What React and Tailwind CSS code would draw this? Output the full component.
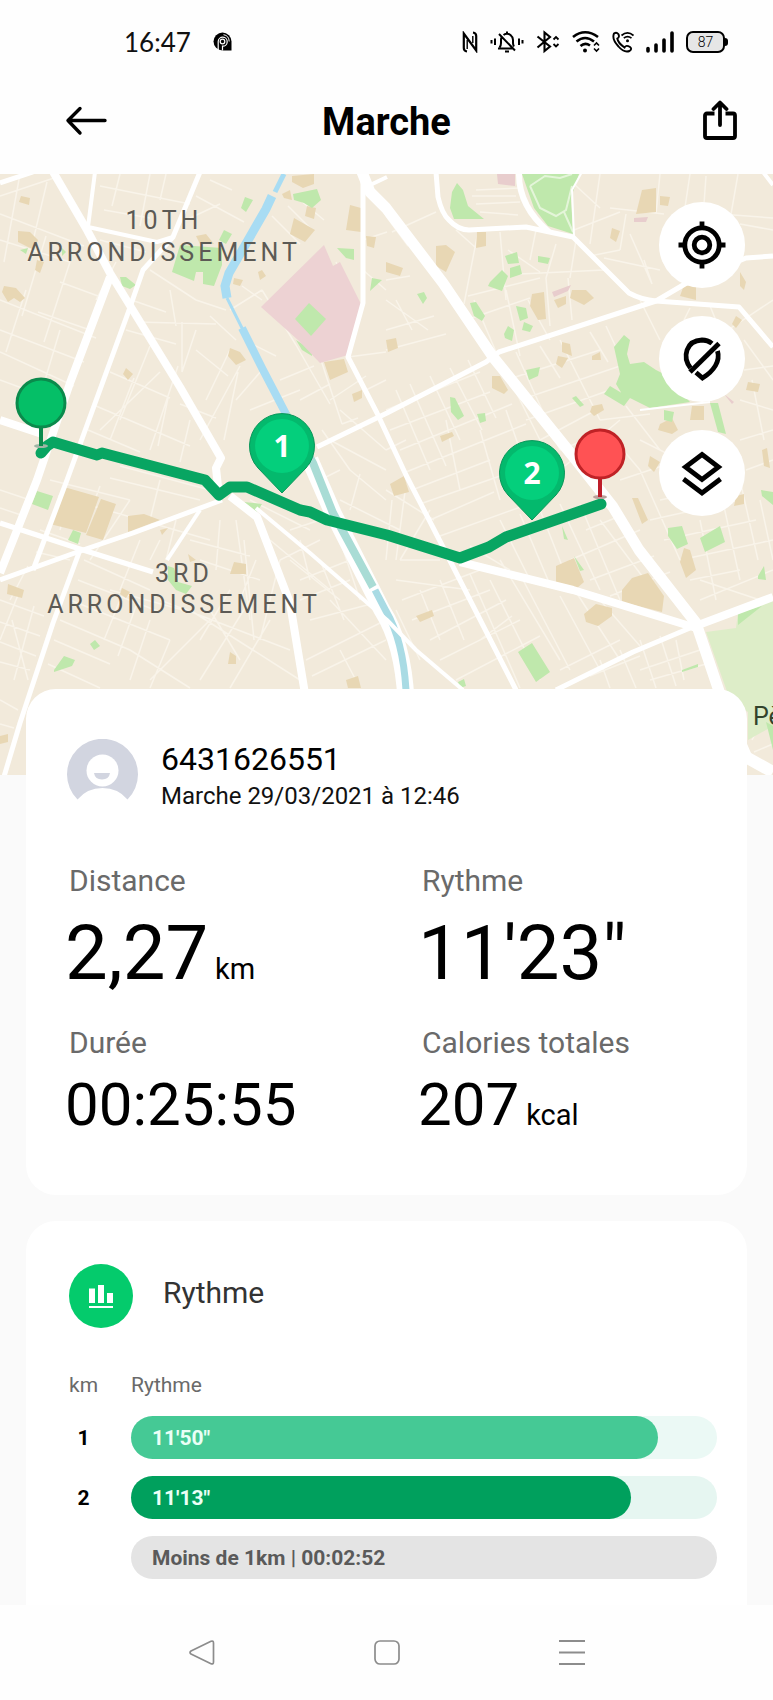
const SPLITS = [
  { km: "1", pace: "11'50\"", share: 90, fill: "bg-[#45c995]", track: "bg-[#ebf9f5]" },
  { km: "2", pace: "11'13\"", share: 85.3, fill: "bg-[#00a05d]", track: "bg-[#e6f6f1]" },
];

const MINOR_ROADS = [
  "M0 214L84 246M0 240L70 262M0 196L60 176M0 300L96 338M0 330L84 362M0 352L74 386M0 380L60 402M20 174L4 262M47 182L28 262M46 236L22 316M70 262L44 342M26 290L6 352M60 330L36 410M22 388L14 404",
  "M100 186L190 204M104 210L150 218M120 174L112 206M150 174L140 226M196 196L244 222M186 220L220 204M166 174L160 200M210 180L232 190M100 240L146 252M116 262L96 300M60 282L98 296M38 312L90 330M120 296L166 312",
  "M126 330L176 344M136 322L216 324M170 290L176 326M150 270L196 300M196 300L226 310M182 322L182 372M150 346L120 420M178 366L150 450M196 330L182 372M160 372L100 430M196 350L228 376M230 350L206 400M240 366L200 440M110 372L170 398M96 406L190 446M88 430L140 452M168 398L158 446M180 404L216 418M190 420L180 462M134 378L110 440M236 340L210 316M238 372L224 440",
  "M244 340L276 356M230 310L262 290M262 290L296 345M262 370L236 400M280 380L314 366M296 345L330 404M250 410L300 390M262 300L242 286M300 400L330 384M288 206L312 230M272 216L300 244M300 200L324 220M336 262L352 300M320 357L342 424M330 400L366 376M342 424L358 418M366 390L386 380M363 240L387 232M363 270L386 290M348 357L386 352",
  "M386 216L408 246M392 232L436 212M386 280L410 276M386 300L428 330M386 330L434 316M386 350L446 334M396 300L412 330M456 230L476 248M478 232L464 304M500 232L506 300M468 296L540 278M466 320L530 298M520 274L604 270M536 230L530 260M556 244L546 278M506 290L520 356M474 300L496 352M546 278L550 326M528 300L550 340M568 278L572 320M576 240L570 278M540 272L508 250",
  "M476 190L520 188M472 196L516 196M476 204L520 202M480 212L518 215M574 184L600 208M600 174L590 244M610 208L664 214M626 214L620 250M620 250L590 256M630 234L652 284M660 174L656 214M690 174L684 214M706 176L704 204M738 174L730 220M720 214L773 218M740 224L773 230M574 230L620 212M604 258L660 270M644 260L652 284",
  "M500 360L540 440M516 352L560 450M540 346L560 378M560 340L600 420M590 332L608 362M606 326L620 356M506 380L600 350M520 400L620 366M526 420L610 390M540 440L600 408M600 420L650 414M626 406L660 450M560 450L610 430M640 440L700 470M560 470L620 420M606 430L640 470M640 300L660 340M690 308L684 320M710 306L724 340",
  "M396 390L430 470M410 384L446 466M430 376L460 440M450 368L482 430M468 360L496 418M386 410L480 372M390 430L490 392M400 450L512 404M406 472L526 424M412 490L490 460M420 504L500 476M430 520L494 492M440 536L540 500M446 420L460 490M480 430L500 500M506 410L520 450M386 450L406 440",
  "M386 490L434 520M392 500L386 560M406 484L396 560M430 510L400 560M350 470L386 500M330 440L386 470M322 430L350 470M340 410L386 450M320 480L340 470M340 500L400 530M360 474L350 510",
  "M400 560L440 560M396 580L470 590M402 600L480 570M412 620L490 590M430 640L506 600M440 660L520 620M456 680L540 636M470 574L520 688M490 580L540 680M500 560L560 660M520 574L570 670M560 596L600 670M576 592L620 660M600 600L640 646M480 640L512 616M420 590L440 640M396 610L420 660M440 580L464 640M500 520L530 580M520 514L548 580M540 510L570 586M560 504L600 590M580 504L620 600M470 546L510 570",
  "M600 520L660 600M586 530L620 516M570 560L640 530M590 580L654 556M610 596L670 572M640 470L680 560M660 500L720 488M650 520L740 500M664 540L756 520M680 560L773 540M690 580L740 570M700 600L773 570M720 488L740 580M740 480L758 560M760 500L773 560M700 520L716 600M620 480L680 460M740 440L773 430M746 470L773 460M740 400L773 410M752 380L764 440M744 370L773 366M744 340L773 380M728 330L773 300M700 580L760 600",
  "M560 670L620 640M600 660L610 688M620 650L636 688M640 640L656 688M660 636L676 686M640 670L700 650M650 680L706 664M676 640L684 680M590 676L640 656",
  "M50 480L130 500M58 496L210 540M110 478L200 500M120 466L210 490M130 500L90 560M160 480L150 520M100 486L84 530M0 490L30 500M0 508L24 516M40 530L80 544M36 552L70 560M70 490L60 530M140 540L120 590M160 540L150 560M176 520L166 560M84 560L150 590M78 580L160 612M70 600L170 640M60 620L130 650M54 640L110 664M48 664L100 688M0 600L44 616M0 622L40 636M0 642L36 656M0 662L30 670M20 590L0 640M34 606L14 680M28 566L10 600M12 620L28 680",
  "M190 540L250 556M200 560L260 580M220 520L216 570M236 520L250 620M244 540L254 640M256 560L240 600M230 590L200 640M210 620L150 680M250 600L200 680M270 620L230 688M120 600L104 640M136 606L118 656M150 620L130 680M170 640L150 688M190 610L300 680M160 600L290 650M130 650L190 688M110 590L190 612M210 610L240 660M280 560L260 640",
  "M270 540L330 590M290 560L340 600M280 560L320 540M300 580L350 560M300 600L350 580M310 620L386 600M306 660L386 620M312 676L386 640M320 560L344 620M340 540L360 600M330 600L386 660M340 650L360 688M300 540L310 580M290 530L320 520M250 500L310 530",
  "M752 740L773 700M754 752L773 744M766 700L773 730M0 700L18 710M0 724L14 728",
].join("");

const GREEN_AREAS = [
  "M180 245L222 248L222 265L214 286L203 284L203 272L196 272L194 281L172 272Z",
  "M245 197L253 200L246 212L241 208Z",
  "M224 230L232 234L226 244L219 240Z",
  "M293 194L317 189L321 200L312 208L304 203L294 200Z",
  "M120 277L126 277L136 285L130 289L122 286Z",
  "M20 250L28 248L26 254ZM62 248L66 252L62 256Z",
  "M337 248L354 249L354 260L346 258Z",
  "M372 278L382 280L370 291Z",
  "M296 340L312 350L312 356L302 350Z",
  "M452 192L457 183L463 190L468 206L484 219L454 219L450 208Z",
  "M505 256L517 252L519 263L508 264ZM510 268L520 265L522 274L510 278ZM490 282L502 270L508 276L502 291L488 286Z",
  "M538 256L550 258L548 264L538 262Z",
  "M417 294L424 292L427 298L423 304Z",
  "M470 303L476 302L485 316L482 321L474 316Z",
  "M516 306L526 308L528 318L520 321ZM524 322L533 326L530 332L522 330ZM504 334L508 326L514 330L512 341L505 338Z",
  "M526 370L540 367L538 376L529 380Z",
  "M450 397L455 398L464 416L458 420L451 412Z",
  "M477 414L485 413L486 421L480 423Z",
  "M572 398L576 396L584 405L580 407Z",
  "M614 347L624 335L630 340L627 354L630 364L644 362L656 370L664 374L690 402L650 408L622 394L616 384L620 374Z",
  "M610 386L630 398L624 406L604 394Z",
  "M710 403L718 403L726 434L718 432ZM664 410L674 412L672 422L664 420Z",
  "M668 528L682 526L688 544L677 549L668 536Z",
  "M700 538L720 526L725 542L705 552Z",
  "M761 490L773 492L773 505L762 496Z",
  "M758 576L764 566L766 580L758 579Z",
  "M37 491L53 496L48 510L32 504Z",
  "M73 530L81 533L78 544L68 540Z",
  "M168 566L174 568L178 582L192 586L186 594L176 590L168 580Z",
  "M244 502L262 504L257 512Z",
  "M90 644L95 640L100 646L94 650Z",
  "M54 670L64 656L75 660L72 666L54 672Z",
  "M518 652L532 643L550 672L536 682Z",
  "M562 526L568 540L564 539ZM574 556L584 570L580 571Z",
  "M458 682L464 679L466 686L460 688Z",
  "M682 670L698 664L698 667L682 672Z",
].join("");

const BUILT_AREAS = [
  "M292 176L314 174L314 184L303 188L292 182Z",
  "M282 194L290 190L292 200L284 198ZM307 206L316 208L314 219L305 216Z",
  "M294 218L315 230L305 242L290 234Z",
  "M350 205L361 208L361 232L346 230Z",
  "M366 236L376 237L374 248L367 246Z",
  "M196 236L206 234L214 244L200 244Z",
  "M21 196L30 198L29 205L19 202Z",
  "M18 231L30 232L38 240L34 250L18 242Z",
  "M37 260L44 262L40 273L35 270Z",
  "M4 286L16 288L25 298L20 302L14 298L8 302L2 292Z",
  "M258 272L262 270L266 276L260 280ZM234 278L243 280L240 286L233 284Z",
  "M230 348L240 352L246 360L236 365L228 356Z",
  "M126 368L133 374L128 380L123 374Z",
  "M324 362L344 359L348 372L330 380Z",
  "M352 394L362 390L362 398L354 402Z",
  "M386 262L403 268L400 276L386 272Z",
  "M436 246L446 245L455 252L446 272L436 266Z",
  "M477 232L486 232L486 246L476 248Z",
  "M532 294L544 292L546 319L538 320L530 306Z",
  "M554 300L566 296L566 304L558 308ZM572 290L586 290L594 298L584 305L570 298Z",
  "M642 190L656 188L656 212L636 214ZM660 196L670 197L668 206L660 205Z",
  "M612 228L620 231L616 242L610 238Z",
  "M684 285L696 287L696 300L680 296ZM740 272L746 282L744 290L740 286ZM736 316L742 320L736 328L732 324Z",
  "M386 340L396 338L398 348L388 352Z",
  "M492 376L500 376L508 390L504 394L492 388Z",
  "M562 342L570 344L572 356L562 352ZM558 356L568 358L562 368L556 364Z",
  "M592 356L600 352L601 360L592 360Z",
  "M592 406L602 404L604 410L594 416L590 412Z",
  "M660 424L672 418L678 430L672 434L658 430ZM692 406L704 406L704 420L690 420Z",
  "M748 382L760 384L758 392L746 390Z",
  "M440 436L452 432L454 436L442 442Z",
  "M650 456L660 462L654 472L648 466ZM762 450L767 448L770 468L764 466Z",
  "M390 484L404 476L409 492L394 496Z",
  "M64 487L99 497L86 533L50 524Z",
  "M101 499L116 504L103 540L86 535Z",
  "M128 516L144 514L160 520L128 532Z",
  "M160 530L168 528L162 535Z",
  "M8 584L24 590L22 598L7 594Z",
  "M188 554L196 560L190 562ZM234 562L246 564L246 574L230 574Z",
  "M122 588L130 592L126 598L120 594Z",
  "M230 652L236 656L236 664L228 664Z",
  "M346 680L358 676L361 688L348 688Z",
  "M0 736L8 734L8 742L0 744Z",
  "M556 566L574 558L584 582L576 589L556 584Z",
  "M622 590L632 578L648 573L664 596L662 612L622 602Z",
  "M584 614L596 604L612 608L612 616L598 626L586 622Z",
  "M416 616L432 610L434 616L420 622Z",
  "M684 548L690 550L696 570L686 578L680 562Z",
  "M632 498L638 498L648 520L642 524Z",
  "M736 496L744 494L744 504L734 506Z",
].join("");

function MapArtwork() {
  return (
    <svg
      className="absolute inset-0 h-full w-full"
      viewBox="0 174 773 601"
      preserveAspectRatio="xMidYMin slice"
      role="img"
      aria-label="Parcours de la marche"
    >
      <rect y="174" width="773" height="601" fill="#f2eadb" />
      <path d={MINOR_ROADS} fill="none" stroke="#f9f4ea" strokeWidth="1.5" />
      <path d={BUILT_AREAS} fill="#e8d7b4" />
      <path d={GREEN_AREAS} fill="#bfe8ac" />

      <path d="M324 245L333 266L340 262L361 304L348 355L320 363L298 340L261 307Z" fill="#edd2d3" />
      <path d="M309 303L326 319L311 336L295 319Z" fill="#bfe8ac" />
      <path d="M497 174H515V186L498 184ZM634 218L648 217L646 222L634 222ZM552 292L571 285L568 291L554 297ZM724 394L734 402L732 404Z" fill="#e8cdcd" />
      <path d="M522 174H579L571 198L573 234L548 226L534 208Z" fill="#bfe8ac" />
      <path d="M530 186L540 208L556 216L566 210L572 186M530 186L545 176L560 178L572 174M564 212L573 232" fill="none" stroke="#e4f5d9" strokeWidth="2" />
      <path d="M773 598L738 613L736 628L706 632L730 700L748 712V740L773 726Z" fill="#ddedc8" />
      <path d="M738 613L762 606L738 625ZM766 722L773 726V750Z" fill="#bfe8ac" />

      <path d="M310 460L333 513L382 610Q403 643 406 700" fill="none" stroke="#fff" strokeWidth="17" />
      <path d="M284 174L275 192" fill="none" stroke="#a8dcf3" strokeWidth="5" />
      <path d="M272 196L266 209L247 242L229 273L225 286L227 298" fill="none" stroke="#a8dcf3" strokeWidth="9" />
      <path d="M227 298L243 330" fill="none" stroke="#a8dcf3" strokeWidth="3" />
      <path d="M242 328L262 368L286 414" fill="none" stroke="#a8dcf3" strokeWidth="8" />
      <path d="M286 414L313 463L333 513L373 587" fill="none" stroke="#a9dcd5" strokeWidth="8" />
      <path d="M375 590L386 611Q403 640 406 690" fill="none" stroke="#a9dbe4" strokeWidth="7" />

      <g fill="none" stroke="#fff" strokeLinejoin="round">
        <path d="M52 170L87 230L110 273L180 387L221 458L216 468L219 496" strokeWidth="8" />
        <path d="M110 277L70 383L37 480L0 573" strokeWidth="8" />
        <path d="M200 172L173 237L143 270L128 313L67 480L33 570" strokeWidth="5" />
        <path d="M95 172L88 227L157 242L173 237" strokeWidth="4" />
        <path d="M0 183L33 172" strokeWidth="5" />
        <path d="M0 420L42 434" strokeWidth="8" />
        <path d="M0 523L83 550L153 572" strokeWidth="5" />
        <path d="M0 580L83 550L133 533L222 500" strokeWidth="5" />
        <path d="M80 550L53 623L20 723L3 780" strokeWidth="5" />
        <path d="M200 510L167 560" strokeWidth="4" />
        <path d="M230 496L257 517L290 603L306 700" strokeWidth="8" />
        <path d="M256 508L310 553L387 620L416 650L463 690" strokeWidth="4" />
        <path d="M363 172V303L348 357L377 413L406 475L443 547L516 690" strokeWidth="5" />
        <path d="M362 172L370 192L386 208L443 283L493 357L576 460L613 507L639 550L696 623L722 700L748 760" strokeWidth="11" />
        <path d="M317 447L387 413L486 362L499 352L656 301L690 281L746 258L773 256" strokeWidth="5" />
        <path d="M436 172L438 197Q442 214 449 220Q458 230 469 230L526 227L573 237L593 257L629 293Q642 300 656 301L739 307L773 347" strokeWidth="5" />
        <path d="M519 172Q518 206 549 232" strokeWidth="6" />
        <path d="M366 187L387 177M763 172L773 185" strokeWidth="4" />
        <path d="M460 562L573 590L693 627L773 597" strokeWidth="8" />
        <path d="M690 628L633 652L556 690" strokeWidth="5" />
        <path d="M574 236L572 190L582 172M640 410L710 402" strokeWidth="2" />
        <path d="M744 756L773 772" strokeWidth="12" />
      </g>

      <path
        d="M41 453L47 446L53 442L97 455L102 453L205 480L219 495L230 487L247 487L300 510L310 512L327 520L387 535L460 558L489 547L506 537L601 504"
        fill="none"
        stroke="#08a562"
        strokeWidth="11"
        strokeLinecap="round"
        strokeLinejoin="round"
      />

      <ellipse cx="41" cy="446" rx="7" ry="2" fill="#9fb5a5" />
      <path d="M41 428V446" stroke="#0b8a4c" strokeWidth="4" />
      <circle cx="41" cy="403" r="24" fill="#05bf67" stroke="#0b8a4c" strokeWidth="3" />

      <ellipse cx="600" cy="497" rx="7" ry="2" fill="#bba09b" />
      <path d="M600 479V497" stroke="#be1e2a" strokeWidth="4" />
      <circle cx="600" cy="454" r="24" fill="#ff5254" stroke="#bf2226" strokeWidth="3" />

      {[
        { x: 282, y: 446, label: "1" },
        { x: 532, y: 473, label: "2" },
      ].map((pin) => (
        <g key={pin.label} transform={`translate(${pin.x} ${pin.y})`}>
          <path
            d="M0 47L-24 22A32.500 32.500 0 1 1 24 22Z"
            fill="#04b96d"
            stroke="#0a965a"
            strokeWidth="1"
          />
          <circle r="27" fill="#04cf7c" />
          <text
            y="11"
            textAnchor="middle"
            fill="#fff"
            className="font-['Open_Sans',sans-serif] text-[30px] font-bold"
          >
            {pin.label}
          </text>
        </g>
      ))}

      <g
        fill="#5c5a55"
        textAnchor="middle"
        className="font-[Roboto,sans-serif] text-[25px] font-normal tracking-[4px]"
      >
        <text x="164" y="229">10TH</text>
        <text x="164" y="261">ARRONDISSEMENT</text>
        <text x="184" y="582">3RD</text>
        <text x="184" y="613">ARRONDISSEMENT</text>
      </g>
      <text x="753" y="725" fill="#33432c" className="font-[Roboto,sans-serif] text-[25px]">
        Pè
      </text>
    </svg>
  );
}

function MapButton({ label, children }) {
  return (
    <button
      type="button"
      aria-label={label}
      className="flex size-[86px] items-center justify-center rounded-full bg-white"
    >
      <svg width="48" height="48" viewBox="0 0 48 48" fill="none" stroke="#000" strokeWidth="4.800">
        {children}
      </svg>
    </button>
  );
}

function StatusBar() {
  return (
    <div className="flex h-[84px] items-center justify-between pr-[45px] pl-[124px]">
      <div className="flex items-center gap-[22px]">
        <time className="font-[Lato,sans-serif] text-[26px] leading-8 text-[#111]">16:47</time>
        <svg width="20" height="20" viewBox="0 0 20 20" fill="none">
          <path d="M9.500 .5A9 9 0 0 1 18.500 9.500V18.500H9.500A9 9 0 0 1 9.500 .5Z" fill="#000" />
          <circle cx="9.500" cy="9.500" r="2.300" stroke="#fff" strokeWidth="1.200" />
          <path d="M5.200 18.500V9.500A4.500 4.500 0 1 1 9.500 14.200V18.500" stroke="#fff" strokeWidth="1.200" />
          <path d="M10.500 2.700Q16 3.500 16.200 9.500" stroke="#fff" strokeWidth="1" />
        </svg>
      </div>
      <div className="flex items-center gap-3">
        <svg width="16" height="22" viewBox="0 0 16 22" fill="none" stroke="#000" strokeWidth="2.200">
          <path d="M5 20.500Q1.800 20 1.800 17V2.500L14.200 19.500V5Q14.200 2 11 1.500" />
          <path d="M5.200 18V9M10.800 12V5" strokeWidth="1.400" />
        </svg>
        <svg width="34" height="24" viewBox="0 0 34 24" fill="none" stroke="#000" strokeWidth="2">
          <path d="M8 18.500H22.500M9.500 17.500Q11 16 11 13V10Q11 8.500 11.500 7.500M13.500 5Q17 2.500 20.500 5Q23 7 23 10V13Q23 15 24 16.500M9 4L25 20.500M17 1.500V3.500M15 21.500H19" />
          <path d="M5 8.500V15M1.500 10V13.500M29 8.500V15M32.500 10V13.500" />
        </svg>
        <svg width="24" height="24" viewBox="0 0 24 24" fill="none" stroke="#000" strokeWidth="2.100">
          <path d="M1.500 6.500L14 16.500L8.500 21V2.500L14 7L1.500 17.500" />
          <path d="M17.500 9.500L20 7L22.500 9.500M17.500 14L20 16.500L22.500 14" strokeWidth="1.800" />
        </svg>
        <svg width="28" height="24" viewBox="0 0 28 24" fill="none" stroke="#000" strokeWidth="2.600">
          <path d="M1 7Q13 -2.500 26 7M4.500 11.500Q13 4.500 22 11.500M8.500 16Q13 12 18 15.500" />
          <circle cx="13" cy="20.500" r="2" fill="#000" stroke="none" />
          <path d="M22 15.500L24.500 13L27 15.500M22 18.500L24.500 21L27 18.500" strokeWidth="1.600" />
        </svg>
        <svg width="22" height="22" viewBox="0 0 22 22" fill="none" stroke="#000" strokeWidth="1.900">
          <path d="M2 2.500Q4.500 .8 6.300 3Q8 6 5.300 7.500Q6 12 12.500 16.500Q14 13.500 18 16Q20.500 18 17.500 20Q12 22 6.500 15.500Q-.5 8 2 2.500Z" />
          <path d="M9.500 4.500Q15.500 -.8 21.500 4.500M11.800 7.200Q15.500 4 19.500 7.200" strokeWidth="1.700" />
          <circle cx="15.500" cy="9.800" r="1.500" fill="#000" stroke="none" />
        </svg>
        <svg width="28" height="22" viewBox="0 0 28 22" stroke="#000" strokeWidth="3.600" strokeLinecap="round">
          <path d="M2 17.500V20M10 14V20M18 9V20M26 2V20" />
        </svg>
        <div className="flex items-center">
          <div className="flex h-[22px] w-[39px] items-center justify-center rounded-[7px] border-2 border-black bg-[#e6e6e6] font-[Roboto,sans-serif] text-sm leading-4 font-light text-black">
            87
          </div>
          <div className="h-2 w-[3px] rounded-r-sm bg-black" />
        </div>
      </div>
    </div>
  );
}

function Header() {
  return (
    <header className="grid h-[90px] grid-cols-[1fr_auto_1fr] items-center px-9 pb-[14px]">
      <button type="button" aria-label="Retour" className="justify-self-start pl-[29px]">
        <svg width="44" height="32" viewBox="0 0 44 32" fill="none" stroke="#000" strokeWidth="3.400" strokeLinecap="round" strokeLinejoin="round">
          <path d="M40 14.500H3M15 2.500L3 14.500L15 27" />
        </svg>
      </button>
      <h1 className="text-[38px] leading-[48px] font-bold">Marche</h1>
      <button type="button" aria-label="Partager" className="justify-self-end">
        <svg width="34" height="44" viewBox="0 0 34 44" fill="none" stroke="#000" strokeWidth="3.800" strokeLinejoin="round">
          <path d="M11.500 13.500H4Q2 13.500 2 15.500V36Q2 38 4 38H30Q32 38 32 36V15.500Q32 13.500 30 13.500H22.500" />
          <path d="M17 25V3M10.500 9L17 2.500L23.500 9" strokeLinecap="round" />
        </svg>
      </button>
    </header>
  );
}

function Stat({ label, value, unit, size }) {
  return (
    <div>
      <dt className="pl-1 text-[30px] leading-10 text-[#6a6a6a]">{label}</dt>
      <dd className={`mt-3 whitespace-nowrap ${size}`}>
        {value}
        {unit && <span className="ml-[7px] text-[29px] leading-none">{unit}</span>}
      </dd>
    </div>
  );
}

function Summary() {
  return (
    <section className="rounded-[30px] bg-white pt-[50px] pb-[60px]">
      <div className="flex gap-[22px] px-[41px]">
        <svg width="72" height="72" viewBox="0 0 72 72">
          <path d="M10.500 60.500A35.500 35.500 0 1 1 60.500 60.500Q51 49 35.500 49T10.500 60.500Z" fill="#d2d5e0" />
          <circle cx="35.500" cy="31.500" r="16" fill="#fff" />
          <path d="M27 34H43Q42 40.500 35 40.500T27 34Z" fill="#d2d5e0" />
        </svg>
        <div>
          <h2 className="text-[32px] leading-[41px]">6431626551</h2>
          <p className="text-2xl leading-[33px] text-[#111]">Marche 29/03/2021 à 12:46</p>
        </div>
      </div>
      <dl className="mt-12 grid grid-cols-2 gap-x-6 gap-y-[30px] pl-[39px]">
        <Stat label="Distance" value="2,27" unit="km" size="text-[76px] leading-[80px]" />
        <Stat label="Rythme" value={"11'23\""} size="text-[76px] leading-[80px]" />
        <Stat label="Durée" value="00:25:55" size="text-[60px] leading-[60px]" />
        <Stat label="Calories totales" value="207" unit="kcal" size="text-[60px] leading-[60px]" />
      </dl>
    </section>
  );
}

function Pace() {
  return (
    <section className="mt-[26px] rounded-t-[30px] bg-white pt-[43px] pr-[30px] pb-[9px] pl-[43px]">
      <div className="flex items-start gap-[30px]">
        <svg width="64" height="64" viewBox="0 0 64 64">
          <circle cx="32" cy="32" r="32" fill="#04cb6c" />
          <path d="M20 24.500H26V39H20ZM29 21H35V39H29ZM38 29H44V39H38ZM20 42H44V44H20Z" fill="#fff" />
        </svg>
        <h2 className="text-[30px] leading-[58px] text-[#333]">Rythme</h2>
      </div>
      <table className="mt-10 w-full border-collapse text-left">
        <thead className="text-[21px] leading-[34px] text-[#6a6a6a]">
          <tr>
            <th className="w-[62px] p-0 pb-[14px] font-normal">km</th>
            <th className="p-0 pb-[14px] font-normal">Rythme</th>
          </tr>
        </thead>
        <tbody className="text-[21px] leading-[45px] font-bold">
          {SPLITS.map((split) => (
            <tr key={split.km}>
              <td className="p-0 pb-[17px]">
                <div className="h-[43px] w-[29px] text-center">{split.km}</div>
              </td>
              <td className="p-0 pb-[17px]">
                <div className={`rounded-full ${split.track}`}>
                  <div
                    className={`h-[43px] rounded-full pl-[21px] text-[#eafff6] ${split.fill}`}
                    style={{ width: `${split.share}%` }}
                  >
                    {split.pace}
                  </div>
                </div>
              </td>
            </tr>
          ))}
          <tr>
            <td className="p-0 pb-[17px]" />
            <td className="p-0 pb-[17px]">
              <div className="h-[43px] rounded-full bg-[#e4e4e4] pl-[21px] text-[#5a5a5a]">
                Moins de 1km | 00:02:52
              </div>
            </td>
          </tr>
        </tbody>
      </table>
    </section>
  );
}

function SystemNav() {
  return (
    <nav className="flex justify-center gap-[159px] bg-[#fefefe] py-[35px]">
      <button type="button" aria-label="Précédent">
        <svg width="26" height="25" viewBox="0 0 26 25" fill="none" stroke="#8c8c8c" strokeWidth="1.700" strokeLinejoin="round">
          <path d="M2 11Q0 12.500 2 14L22 23.700Q24.500 24.500 24.500 22V3Q24.500 .5 22 1.300Z" />
        </svg>
      </button>
      <button type="button" aria-label="Accueil">
        <svg width="26" height="25" viewBox="0 0 26 25" fill="none" stroke="#8c8c8c" strokeWidth="1.700">
          <rect x="1" y="1" width="24" height="23" rx="5" />
        </svg>
      </button>
      <button type="button" aria-label="Applications récentes">
        <svg width="26" height="25" viewBox="0 0 26 25" stroke="#8c8c8c" strokeWidth="2">
          <path d="M0 1H26M0 12.500H26M0 24H26" />
        </svg>
      </button>
    </nav>
  );
}

export default function App() {
  return (
    <div className="bg-[#fafafa] font-[Roboto,sans-serif] text-black">
      <div className="bg-[#fefefe]">
        <StatusBar />
        <Header />
      </div>
      <div className="relative h-[601px] overflow-hidden">
        <MapArtwork />
        <div className="absolute top-7 right-7 flex flex-col gap-7">
          <MapButton label="Recentrer la carte">
            <circle cx="24" cy="24" r="17.200" />
            <circle cx="24" cy="24" r="7.800" />
            <path d="M24 .5V7M24 41V47.500M.5 24H7M41 24H47.500" />
          </MapButton>
          <MapButton label="Masquer le parcours">
            <path d="M12.500 33C4 22 8 5.500 24 5C28.500 5 31.500 6.500 34 8.500M39.500 16C42.500 26 36 36 24.500 43L18 37.500" />
            <path d="M12 37L41 8.500" />
          </MapButton>
          <MapButton label="Calques">
            <path d="M24 5.500L40.500 18L24 30.500L7.500 18Z" />
            <path d="M5.500 30L24 44L42.500 30" />
          </MapButton>
        </div>
      </div>
      <main className="relative mx-[26px] -mt-[86px]">
        <Summary />
        <Pace />
      </main>
      <SystemNav />
    </div>
  );
}
